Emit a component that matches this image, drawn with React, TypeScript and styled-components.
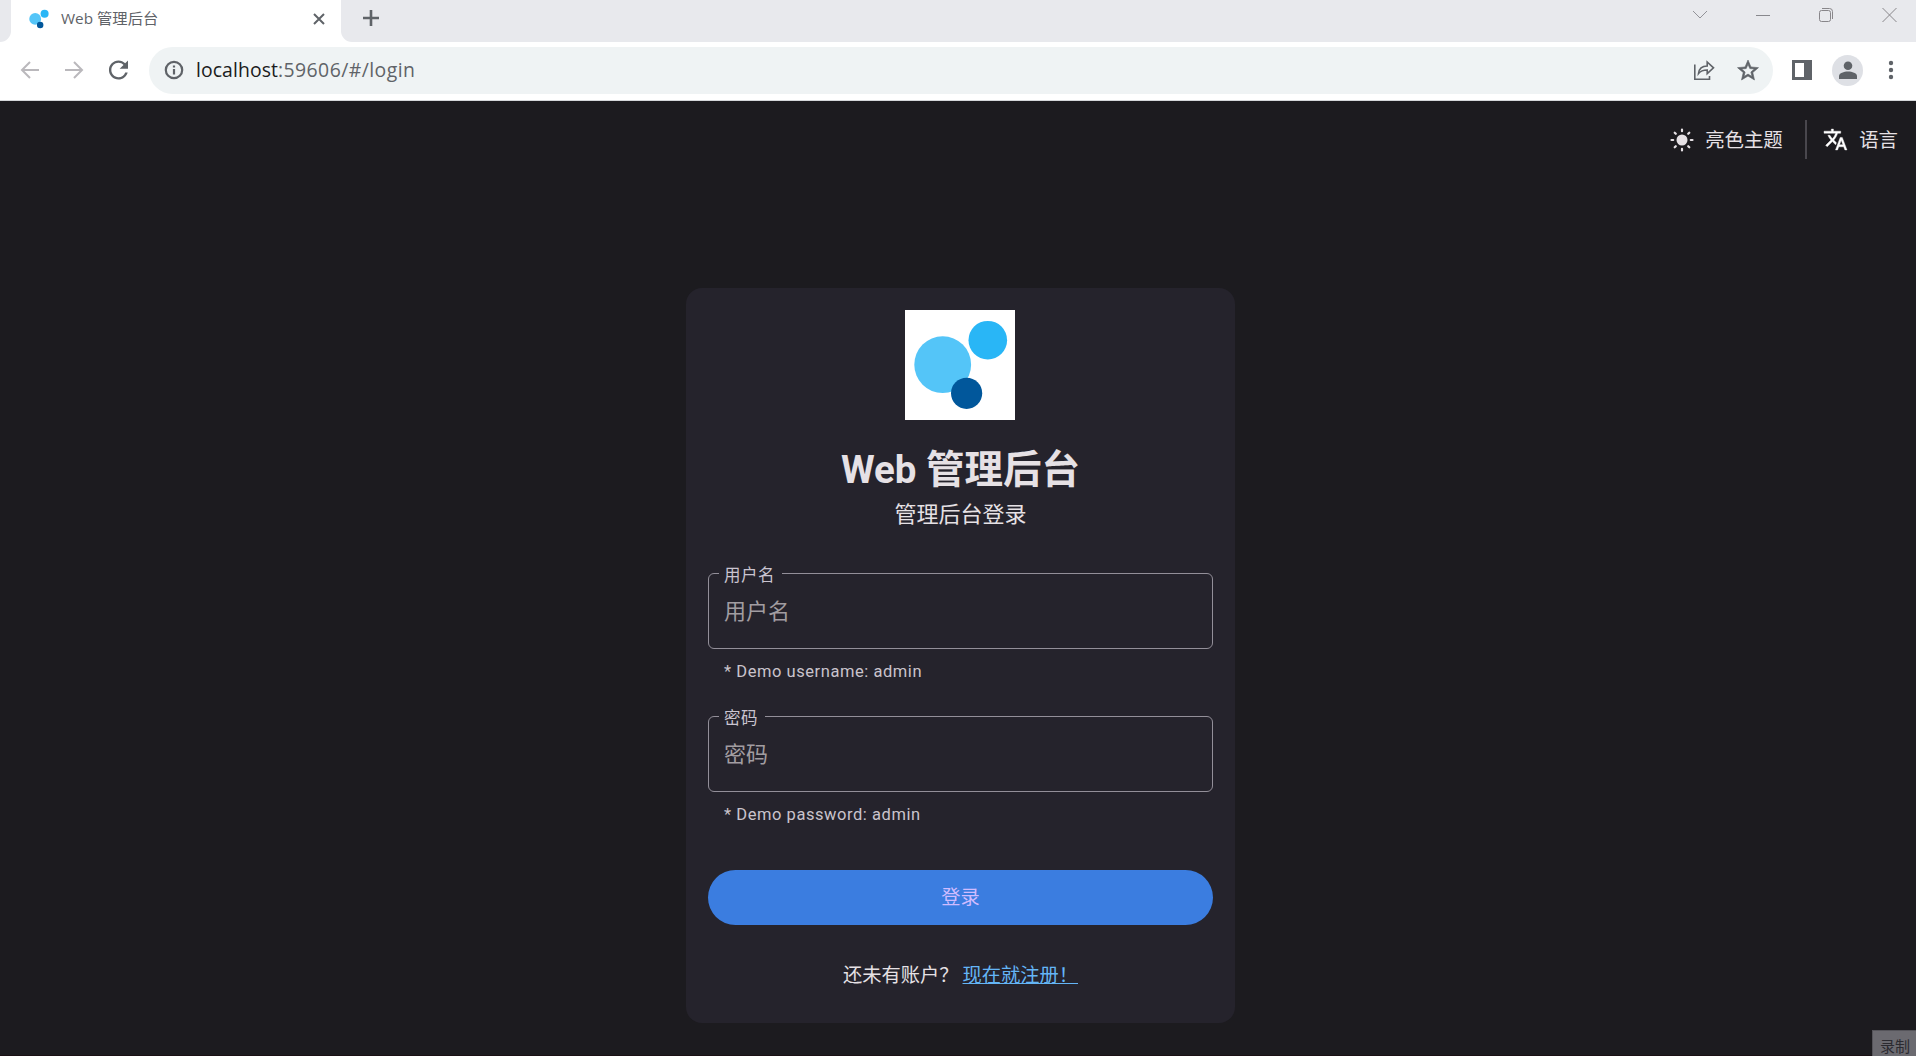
import React from 'react';
import styled, { createGlobalStyle } from 'styled-components';

const GlobalStyle = createGlobalStyle`
  *, *::before, *::after { box-sizing: border-box; }
  body { margin: 0; overflow: hidden; background: #1c1b1f; }
`;

const uiFont = `Roboto, "Noto Sans CJK SC", sans-serif`;
const chromeFont = `"Open Sans", "Noto Sans", "Noto Sans CJK SC", sans-serif`;

const Window = styled.div`
  display: flex;
  flex-direction: column;
  width: 1916px;
  height: 1056px;
  overflow: hidden;
  border-bottom: 1px solid #1a1014;
  background: #1c1b1f;
  font-family: ${uiFont};
`;

const TabStrip = styled.div`
  display: flex;
  height: 42px;
  background: #fff;
`;

const PreviousTab = styled.div`
  width: 11px;
  background: #e8e9ed;
  border-bottom-right-radius: 11px;
`;

const Tab = styled.div`
  display: flex;
  align-items: center;
  width: 330px;
  height: 37px;
  padding: 0 15px 0 18px;
  border-radius: 8px 8px 0 0;
  color: #5f6368;
`;

const TabTitle = styled.span`
  flex: 1;
  padding: 0 0 2px 12px;
  font: 400 15.3px/20px ${chromeFont};
  white-space: pre;
`;

const StripRest = styled.div`
  display: flex;
  flex: 1;
  background: #e8e9ed;
  border-bottom-left-radius: 11px;
`;

const NewTab = styled.div`
  flex: 1;
  padding: 9px 0 0 21px;
  line-height: 0;
`;

const WindowButtons = styled.div`
  display: flex;
  gap: 47px;
  height: 30px;
  align-items: center;
  padding-right: 19px;
`;

const Toolbar = styled.div`
  display: flex;
  align-items: center;
  height: 59px;
  padding: 0 0 2px 20px;
  background: #fff;
  border-bottom: 1px solid #d5d7da;
`;

const NavIcons = styled.div`
  display: flex;
  gap: 24px;
  width: 129px;
`;

const AddressBar = styled.div`
  display: flex;
  align-items: center;
  width: 1624px;
  height: 47px;
  padding: 0 14px 0 15px;
  border-radius: 24px;
  background: #eff3f4;
`;

const Url = styled.div`
  flex: 1;
  padding-left: 12px;
  color: #5f6368;
  font: 400 19.4px/28px ${chromeFont};
  letter-spacing: 0.45px;
`;

const Host = styled.span`
  color: #1b1c20;
  letter-spacing: 0.08px;
`;

const AddressActions = styled.div`
  display: flex;
  gap: 22px;
`;

const ToolbarActions = styled.div`
  display: flex;
  align-items: center;
  padding-left: 19px;
`;

const Avatar = styled.div`
  display: flex;
  align-items: center;
  justify-content: center;
  width: 31px;
  height: 31px;
  margin: 0 25px 0 20px;
  border-radius: 50%;
  background: #dee0e5;
`;

const Page = styled.main`
  display: flex;
  flex-direction: column;
  align-items: center;
  flex: 1;
  color: #e6e1e5;
`;

const Actions = styled.header`
  display: flex;
  align-self: flex-end;
  align-items: center;
  height: 39px;
  margin: 19px 18px 129px 0;
`;

const Action = styled.button`
  display: flex;
  align-items: center;
  gap: 11px;
  padding: 0;
  border: 0;
  background: none;
  color: #e6e1e5;
`;

const ActionText = styled.span`
  padding-top: 3px;
  font: 400 19.4px/28px ${uiFont};
`;

const Divider = styled.div`
  width: 2px;
  height: 39px;
  margin: 0 16px 0 22.5px;
  background: #49474d;
`;

const Card = styled.section`
  display: flex;
  flex-direction: column;
  align-items: center;
  width: 549px;
  height: 735px;
  margin-left: 5px;
  padding: 22px;
  border-radius: 16px;
  background: #25232c;
`;

const LogoBox = styled.div`
  height: 110px;
  margin-right: 1px;
`;

const Title = styled.h1`
  margin: 27px 0 0;
  font: 700 38.5px/46px ${uiFont};
  white-space: pre;
`;

const Subtitle = styled.p`
  margin: 6px 0 0;
  font: 400 22px/32px ${uiFont};
`;

const Field = styled.div<{ $top: number }>`
  align-self: stretch;
  margin-top: ${(p) => p.$top}px;
`;

const Outline = styled.fieldset`
  height: 88px;
  margin: 0;
  padding: 0 15px;
  border: 1px solid #938f99;
  border-radius: 6px;
`;

const Label = styled.legend`
  margin-left: -5px;
  padding: 5px 7px 0 5px;
  color: #cac4d0;
  font: 400 16.5px/19px ${uiFont};
  letter-spacing: 0.5px;
`;

const Input = styled.input`
  width: 100%;
  height: 32px;
  margin-top: 11px;
  padding: 0;
  border: 0;
  outline: 0;
  background: none;
  color: #e6e1e5;
  font: 400 22px/32px ${uiFont};
  &::placeholder { color: #a19da1; opacity: 1; }
`;

const Helper = styled.div`
  padding: 12px 0 0 16px;
  color: #cac4cc;
  font: 400 16.5px/22px ${uiFont};
  letter-spacing: 0.55px;
`;

const Submit = styled.button`
  align-self: stretch;
  height: 55px;
  margin-top: 44px;
  padding: 1px 0 0;
  border: 0;
  border-radius: 28px;
  background: #3b7de0;
  color: #d0bcff;
  font: 400 19.25px/54px ${uiFont};
`;

const Register = styled.p`
  margin: 37px 0 0;
  font: 400 19.25px/28px ${uiFont};
`;

const Link = styled.a`
  margin-left: 4px;
  color: #64b5f6;
  text-decoration: underline;
`;

const Recorder = styled.div`
  position: absolute;
  left: 1872px;
  top: 1030px;
  width: 44px;
  height: 26px;
  overflow: hidden;
  padding: 4px 0 0 7px;
  border: solid #55545a;
  border-width: 1px 0 0 1px;
  background: #6b6a70;
  color: #2b2a30;
  font: 400 15px/24px ${uiFont};
`;

const Logo = ({ size, plain }: { size: number; plain?: boolean }) => (
  <svg width={size} height={size} viewBox={plain ? '8 10 96 90' : '0 0 110 110'}>
    {!plain && <rect width="110" height="110" fill="#fff" />}
    <circle cx="37.7" cy="54.7" r="28.4" fill="#54c5f8" />
    <circle cx="82.8" cy="30.2" r="19.3" fill="#29b6f6" />
    <circle cx="61.6" cy="83.3" r="15.6" fill="#01579b" />
  </svg>
);

const grey = '#5f6368';

const TextField = ({ label, helper, top, type }: { label: string; helper: string; top: number; type: string }) => (
  <Field $top={top}>
    <Outline>
      <Label>{label}</Label>
      <Input type={type} placeholder={label} />
    </Outline>
    <Helper>{helper}</Helper>
  </Field>
);

export default function App() {
  return (
    <Window>
      <GlobalStyle />
      <TabStrip>
        <PreviousTab />
        <Tab>
          <Logo size={20} plain />
          <TabTitle>Web 管理后台</TabTitle>
          <svg width="14" height="14" viewBox="0 0 14 14" stroke={grey} strokeWidth="2"><path d="M2 2l10 10M12 2L2 12" /></svg>
        </Tab>
        <StripRest>
          <NewTab>
            <svg width="18" height="18" viewBox="0 0 18 18" stroke={grey} strokeWidth="2.6"><path d="M9 1v16M1 9h16" /></svg>
          </NewTab>
          <WindowButtons>
            <svg width="16" height="16" fill="none" stroke="#929298"><path d="M1 4l7 7 7-7" /></svg>
            <svg width="16" height="16" fill="none" stroke="#88888d"><path d="M1 8.5h14" /></svg>
            <svg width="16" height="16" fill="none" stroke="#88868a"><rect x="1.500" y="3.500" width="11" height="11" rx="2" /><path d="M4 1.500h7.500a3 3 0 0 1 3 3V12" /></svg>
            <svg width="16" height="16" fill="none" stroke="#88868a"><path d="M1.500 1l14 14M15.500 1L1.500 15" /></svg>
          </WindowButtons>
        </StripRest>
      </TabStrip>
      <Toolbar>
        <NavIcons>
          <svg width="20" height="20" fill="none" stroke="#bab8bc" strokeWidth="2"><path d="M19 10H2M10 2L2 10l8 8" /></svg>
          <svg width="20" height="20" fill="none" stroke="#bab8bc" strokeWidth="2"><path d="M1 10h17M10 2l8 8-8 8" /></svg>
          <svg width="20" height="20" viewBox="3.200 3.600 16.800 16.800" fill={grey}><path d="M17.650 6.350C16.200 4.900 14.210 4 12 4c-4.420 0-7.990 3.580-7.990 8s3.570 8 7.990 8c3.730 0 6.840-2.550 7.730-6h-2.080c-.82 2.330-3.040 4-5.650 4-3.310 0-6-2.690-6-6s2.690-6 6-6c1.660 0 3.140.69 4.220 1.780L13 11h7V4l-2.350 2.350z" /></svg>
        </NavIcons>
        <AddressBar>
          <svg width="20" height="20" fill="none" stroke={grey} strokeWidth="2.200"><circle cx="10" cy="10" r="8.200" /><path d="M10 9v5.500M10 5.500v2" /></svg>
          <Url><Host>localhost</Host>:59606/#/login</Url>
          <AddressActions>
            <svg width="23" height="22" fill="none" stroke={grey} strokeWidth="1.600"><path d="M2.800 5.500v14.700H17.500V17M6.500 14.500c.5-4.500 3.500-7.500 8.700-7.500V3l6.300 5.800-6.300 5.800v-3.600c-4 0-6.700 1-8.700 3.500z" /></svg>
            <svg width="22" height="22" viewBox="1.500 1 21 21" fill={grey} stroke={grey} strokeWidth="0.600"><path d="M22 9.240l-7.190-.62L12 2 9.190 8.630 2 9.240l5.460 4.730L5.820 21 12 17.270 18.180 21l-1.630-7.030L22 9.240zM12 15.400l-3.760 2.270 1-4.280-3.320-2.880 4.380-.38L12 6.100l1.710 4.040 4.380.38-3.320 2.880 1 4.280L12 15.400z" /></svg>
          </AddressActions>
        </AddressBar>
        <ToolbarActions>
          <svg width="20" height="20"><path d="M0 0h20v20H0zM3 3v14h9V3z" fill={grey} fillRule="evenodd" /></svg>
          <Avatar>
            <svg width="18" height="18" fill={grey}><circle cx="9" cy="4.800" r="4.300" /><path d="M0 18v-3c0-3 5-4.500 9-4.500s9 1.500 9 4.500v3z" /></svg>
          </Avatar>
          <svg width="6" height="20" fill={grey}><circle cx="3" cy="3" r="2.200" /><circle cx="3" cy="10" r="2.200" /><circle cx="3" cy="17" r="2.200" /></svg>
        </ToolbarActions>
      </Toolbar>
      <Page>
        <Actions>
          <Action>
            <svg width="24" height="24" fill="#e6e1e5" stroke="#e6e1e5" strokeLinecap="round"><circle cx="12" cy="12" r="5.500" stroke="none" /><path strokeWidth="2.200" d="M12 1.500v1.700M12 20.800v1.700M1.500 12h1.700M20.800 12h1.700M4.700 4.700l1.100 1.100M18.200 18.200l1.100 1.100M4.700 19.300l1.100-1.100M18.200 5.800l1.100-1.100" /></svg>
            <ActionText>亮色主题</ActionText>
          </Action>
          <Divider />
          <Action>
            <svg width="25" height="25" viewBox="0 0 24 24" fill="#fff" stroke="#fff" strokeWidth="0.400"><path d="M12.870 15.070l-2.540-2.510.03-.03c1.740-1.940 2.980-4.170 3.710-6.530H17V4h-7V2H8v2H1v1.990h11.170C11.500 7.920 10.440 9.750 9 11.350 8.070 10.320 7.300 9.190 6.690 8h-2c.73 1.630 1.730 3.170 2.980 4.560l-5.090 5.020L4 19l5-5 3.110 3.110.76-2.040zM18.500 10h-2L12 22h2l1.120-3h4.750L21 22h2l-4.500-12zm-2.620 7l1.620-4.330L19.120 17h-3.240z" /></svg>
            <ActionText>语言</ActionText>
          </Action>
        </Actions>
        <Card>
          <LogoBox><Logo size={110} /></LogoBox>
          <Title>Web 管理后台</Title>
          <Subtitle>管理后台登录</Subtitle>
          <TextField label="用户名" helper="* Demo username: admin" top={30} type="text" />
          <TextField label="密码" helper="* Demo password: admin" top={21} type="password" />
          <Submit>登录</Submit>
          <Register>还未有账户？<Link>现在就注册！</Link></Register>
        </Card>
      </Page>
      <Recorder>录制</Recorder>
    </Window>
  );
}
